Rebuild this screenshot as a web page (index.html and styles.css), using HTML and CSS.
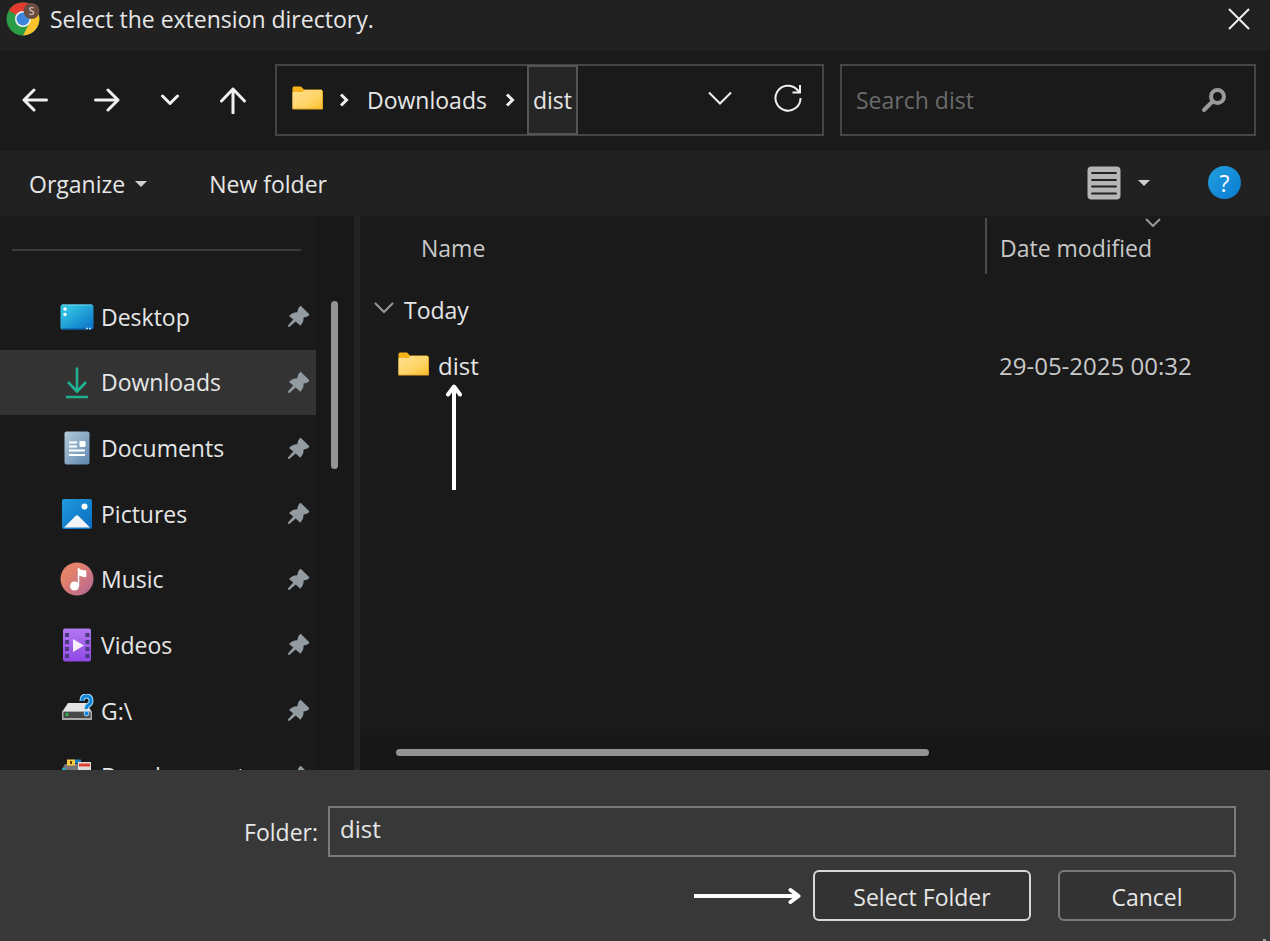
FILE: index.html
```html
<!DOCTYPE html>
<html lang="en">
<head>
    <meta charset="UTF-8">
    <meta name="viewport" content="width=device-width, initial-scale=1.0">
    <title>Select the extension directory.</title>
    <link rel="stylesheet" href="styles.css">
</head>
<body>
    <!-- Shared icons and gradients -->
    <svg class="defs" width="0" height="0" aria-hidden="true">
        <defs>
            <linearGradient id="g-folder" x1="0" y1="0" x2="1" y2="1">
                <stop offset="0" stop-color="#ffe08f"/>
                <stop offset="0.6" stop-color="#ffd466"/>
                <stop offset="1" stop-color="#fbbd2c"/>
            </linearGradient>
            <linearGradient id="g-desktop" x1="0" y1="0" x2="1" y2="1">
                <stop offset="0.2" stop-color="#2fbfe0"/>
                <stop offset="1" stop-color="#0a6fc8"/>
            </linearGradient>
            <linearGradient id="g-doc" x1="0" y1="0" x2="1" y2="1">
                <stop offset="0" stop-color="#b4cbd8"/>
                <stop offset="1" stop-color="#5f87b0"/>
            </linearGradient>
            <linearGradient id="g-pic" x1="0" y1="0" x2="1" y2="1">
                <stop offset="0" stop-color="#1f9ade"/>
                <stop offset="1" stop-color="#0a6cc0"/>
            </linearGradient>
            <linearGradient id="g-music" x1="0" y1="0" x2="1" y2="1">
                <stop offset="0.3" stop-color="#e5826a"/>
                <stop offset="1" stop-color="#b0669c"/>
            </linearGradient>
            <linearGradient id="g-video" x1="0" y1="0" x2="0" y2="1">
                <stop offset="0" stop-color="#b377f0"/>
                <stop offset="1" stop-color="#9048e6"/>
            </linearGradient>
        </defs>
        <symbol id="folder" viewBox="0 0 31 24">
            <path d="M0.500 2a1.500 1.500 0 0 1 1.500-1.500h7l3 3H29a1.500 1.500 0 0 1 1.500 1.500V22H0.500z" fill="#f6b21b"/>
            <path d="M0.500 6h10l2-2H30v19H0.500z" fill="url(#g-folder)"/>
            <path d="M0.500 23h30V5" fill="none" stroke="#e9a520"/>
        </symbol>
        <symbol id="pin" viewBox="0 0 23 23">
            <path d="M13.700.7L22.300 9.300Q22.300 11.500 16.500 12.500Q17 17 13.300 20.700L8.700 16.500L2 22.300L.7 20.800L6.300 14.500L2 11Q5 7.500 10.300 7.300Q10.800 2.500 13.700.7z" fill="#929b9f"/>
        </symbol>
    </svg>

    <header class="titlebar">
        <svg class="app-icon" width="34" height="34" viewBox="0 0 34 34" aria-hidden="true">
            <circle cx="17" cy="17" r="16.500" fill="#2a9d46"/>
            <path d="M17 17L2.700 8.800A16.500 16.500 0 0 1 31.300 8.800z" fill="#e33b2e"/>
            <path d="M17 9.500H31.600A16.500 16.500 0 0 1 17 33.500L24 20z" fill="#fcc42c"/>
            <path d="M2.700 8.800L10 21l7-4z" fill="#2a9d46"/>
            <circle cx="17" cy="17" r="8" fill="#f4f4f4"/>
            <circle cx="17" cy="17" r="6.500" fill="#3d86dc"/>
            <circle cx="25.500" cy="9" r="8" fill="#6b4c41"/>
            <text x="25.500" y="13" text-anchor="middle" class="badge-text">S</text>
        </svg>
        <h1>Select the extension directory.</h1>
        <button class="close-btn" aria-label="Close">
            <svg width="22" height="22" viewBox="0 0 22 22" class="line"><path d="M1 1l20 20M21 1L1 21"/></svg>
        </button>
    </header>

    <nav class="navbar">
        <div class="history">
            <button class="arrow-btn" aria-label="Back">
                <svg width="26" height="24" viewBox="0 0 26 24" class="line bold"><path d="M24.500 12H2M12 2L2 12L12 22"/></svg>
            </button>
            <button class="arrow-btn" aria-label="Forward">
                <svg width="26" height="24" viewBox="0 0 26 24" class="line bold"><path d="M1.500 12h22.500M14 2L24 12L14 22"/></svg>
            </button>
            <button class="recent-btn" aria-label="Recent locations">
                <svg width="18" height="12" viewBox="0 0 18 12" class="line bold"><path d="M1.500 2L9 9.500L16.500 2"/></svg>
            </button>
            <button class="arrow-btn" aria-label="Up">
                <svg width="28" height="28" viewBox="0 0 28 28" class="line bold"><path d="M14 27V3M2.500 15L14 3L25.500 15"/></svg>
            </button>
        </div>

        <div class="address">
            <svg class="address-folder" width="31" height="24"><use href="#folder"/></svg>
            <svg class="crumb-sep" width="10" height="14" viewBox="0 0 10 14"><path d="M2 1.500L7.500 7L2 12.500"/></svg>
            <button class="crumb">Downloads</button>
            <svg class="crumb-sep" width="10" height="14" viewBox="0 0 10 14"><path d="M2 1.500L7.500 7L2 12.500"/></svg>
            <button class="crumb current">dist</button>
            <button class="address-btn" aria-label="Previous locations">
                <svg width="24" height="14" viewBox="0 0 24 14" class="line"><path d="M1 1.500L12 12.500L23 1.500"/></svg>
            </button>
            <button class="address-btn" aria-label="Refresh">
                <svg width="28" height="28" viewBox="0 0 28 28" class="line"><path d="M26.500 14A12.500 12.500 0 1 1 23 5.500L25.500 8M26 1v7.500h-7.500"/></svg>
            </button>
        </div>

        <div class="search">
            <input type="text" placeholder="Search dist" aria-label="Search dist">
            <svg width="24" height="24" viewBox="0 0 24 24" aria-hidden="true"><circle cx="15.500" cy="8.500" r="6.500"/><path d="M10.500 13.500L2 22"/></svg>
        </div>
    </nav>

    <div class="toolbar">
        <button class="tool-btn">Organize <span class="caret"></span></button>
        <button class="tool-btn">New folder</button>
        <button class="view-btn" aria-label="Change your view">
            <svg width="34" height="34" viewBox="0 0 34 34">
                <rect x="0.500" y="0.500" width="33" height="33" rx="4" fill="#b5b5b5"/>
                <path d="M5 7h24M5 14h24M5 20.500h24M5 27.500h24" stroke="#222" stroke-width="1.800" stroke-linecap="round"/>
            </svg>
            <span class="caret"></span>
        </button>
        <button class="help-btn" aria-label="Help">?</button>
    </div>

    <main class="content">
        <aside class="sidebar">
            <div class="tree">
                <hr>
                <ul class="places">
                    <li>
                        <a href="#">
                            <svg class="place-icon" width="34" height="34" viewBox="0 0 34 34">
                                <rect x="0.500" y="4.500" width="33" height="25" rx="2" fill="url(#g-desktop)"/>
                                <path d="M2 5h30" stroke="#6fd3ee"/>
                                <path d="M2 29h30" stroke="#0b4f96"/>
                                <circle cx="5" cy="9" r="1.700" fill="#fff"/><circle cx="5" cy="14.500" r="1.700" fill="#fff"/>
                                <path d="M26 28.500h2M29 28.500h2" stroke="#b8e2fa" stroke-width="1.500"/>
                            </svg>
                            Desktop
                        </a>
                        <svg class="pin" width="23" height="23"><use href="#pin"/></svg>
                    </li>
                    <li class="selected">
                        <a href="#">
                            <svg class="place-icon" width="34" height="34" viewBox="0 0 34 34">
                                <path d="M17 2.500V26M8 17l9 9.500L26 17M6 32h22" fill="none" stroke="#20b191" stroke-width="2.600"/>
                            </svg>
                            Downloads
                        </a>
                        <svg class="pin" width="23" height="23"><use href="#pin"/></svg>
                    </li>
                    <li>
                        <a href="#">
                            <svg class="place-icon" width="34" height="34" viewBox="0 0 34 34">
                                <rect x="4.500" y="0.500" width="25" height="33" rx="2" fill="url(#g-doc)"/>
                                <path d="M9 11.500h8M9 15.500h8M9 19.500h16M9 24h16" stroke="#fff" stroke-width="1.800"/>
                                <rect x="19.500" y="10" width="6" height="6" rx="1" fill="#fff"/>
                            </svg>
                            Documents
                        </a>
                        <svg class="pin" width="23" height="23"><use href="#pin"/></svg>
                    </li>
                    <li>
                        <a href="#">
                            <svg class="place-icon" width="34" height="34" viewBox="0 0 34 34">
                                <rect x="2" y="2" width="30" height="30" rx="2" fill="url(#g-pic)"/>
                                <circle cx="24.500" cy="9.500" r="3" fill="#fff"/>
                                <path d="M4 30.500L15.500 19q1.500-1.500 3 0L30 30.500z" fill="#f1f5fa"/>
                            </svg>
                            Pictures
                        </a>
                        <svg class="pin" width="23" height="23"><use href="#pin"/></svg>
                    </li>
                    <li>
                        <a href="#">
                            <svg class="place-icon" width="34" height="34" viewBox="0 0 34 34">
                                <circle cx="17" cy="17" r="16.500" fill="url(#g-music)"/>
                                <path d="M18.500 24V6.500q1 2.500 7 2.500v5.500q-4 0-7-2" fill="#fff" stroke="#fff" stroke-width="1.500" stroke-linejoin="round"/>
                                <circle cx="14.500" cy="24" r="4.500" fill="#fff"/>
                            </svg>
                            Music
                        </a>
                        <svg class="pin" width="23" height="23"><use href="#pin"/></svg>
                    </li>
                    <li>
                        <a href="#">
                            <svg class="place-icon" width="34" height="34" viewBox="0 0 34 34">
                                <rect x="3" y="0.500" width="28" height="33" rx="2" fill="url(#g-video)"/>
                                <path d="M7 5v26M27.500 5v26" stroke="#4a3a80" stroke-width="4" stroke-dasharray="4 3"/>
                                <path d="M13 11v13l11-6.500z" fill="#f4edfd"/>
                            </svg>
                            Videos
                        </a>
                        <svg class="pin" width="23" height="23"><use href="#pin"/></svg>
                    </li>
                    <li>
                        <a href="#">
                            <svg class="place-icon" width="34" height="34" viewBox="0 0 34 34">
                                <path d="M8 9h18l6 9H2z" fill="#e4e4e4"/>
                                <rect x="2" y="17" width="30" height="9" fill="#a9a9a9"/>
                                <rect x="3.500" y="18" width="27" height="6" fill="#484848"/>
                                <rect x="5.500" y="19" width="3" height="3" fill="#27b24a"/>
                                <path d="M22 7q0-5 4.500-5T31 7q0 2.500-2.500 4T26.500 15" fill="none" stroke="#a8d8f5" stroke-width="5"/>
                                <path d="M22 7q0-5 4.500-5T31 7q0 2.500-2.500 4T26.500 15" fill="none" stroke="#0f86d8" stroke-width="3"/>
                                <circle cx="26.500" cy="19.500" r="2.500" fill="#0f86d8" stroke="#a8d8f5"/>
                            </svg>
                            G:\
                        </a>
                        <svg class="pin" width="23" height="23"><use href="#pin"/></svg>
                    </li>
                    <li>
                        <a href="#">
                            <svg class="place-icon" width="34" height="34" viewBox="0 0 34 34">
                                <path d="M2 10l3-5h16v26H2z" fill="#777"/>
                                <path d="M2 9h4v22H2z" fill="#27a8b8"/>
                                <path d="M14 0.500h7v4h-7z" fill="#1e7fc0"/>
                                <rect x="7" y="0.500" width="8" height="6" fill="#fccb4b"/>
                                <path d="M11 2v3" stroke="#5b430a" stroke-width="2"/>
                                <rect x="18" y="3" width="13" height="28" fill="#dcdcdc"/>
                                <path d="M19 6h11" stroke="#e2402f" stroke-width="3"/>
                            </svg>
                            Development
                        </a>
                        <svg class="pin" width="23" height="23"><use href="#pin"/></svg>
                    </li>
                </ul>
            </div>
            <div class="scroll-y"><div class="thumb"></div></div>
        </aside>

        <section class="files">
            <table>
                <thead>
                    <tr>
                        <th class="col-name">Name</th>
                        <th class="col-date">
                            Date modified
                            <svg class="sort" width="16" height="9" viewBox="0 0 16 9"><path d="M1 1l7 7l7-7"/></svg>
                        </th>
                    </tr>
                </thead>
                <tbody>
                    <tr class="group">
                        <td colspan="2">
                            <div class="cell">
                                <svg class="sort-chevron" width="20" height="12" viewBox="0 0 20 12"><path d="M1 1l9 9l9-9"/></svg>
                                Today
                            </div>
                        </td>
                    </tr>
                    <tr class="file">
                        <td>
                            <div class="cell">
                                <svg class="file-icon" width="31" height="24"><use href="#folder"/></svg>
                                <span class="file-name">dist
                                    <svg class="arrow-up" width="16" height="106" viewBox="0 0 16 106"><path d="M8 106V4"/><path class="head" d="M2 10.500L8 2.500L14 10.500"/></svg>
                                </span>
                            </div>
                        </td>
                        <td class="date">29-05-2025 00:32</td>
                    </tr>
                </tbody>
            </table>
            <div class="scroll-x"><div class="thumb"></div></div>
        </section>
    </main>

    <footer class="footer">
        <div class="folder-row">
            <label for="folder-name">Folder:</label>
            <input type="text" id="folder-name" value="dist">
        </div>
        <div class="actions">
            <svg class="arrow-right" width="107" height="18" viewBox="0 0 107 18"><path d="M0 9h103"/><path class="head" d="M96.500 3l8 6L96.500 15"/></svg>
            <button class="primary-btn">Select Folder</button>
            <button class="secondary-btn">Cancel</button>
        </div>
        <span class="grip"></span>
    </footer>
</body>
</html>
```

FILE: styles.css
```css
:root {
    --bg: #1a1a1a;
    --bar: #212121;
    --footer: #383838;
    --text: #e6e6e6;
    --border: #454545;
}

* {
    box-sizing: border-box;
}

body {
    margin: 0;
    height: 100vh;
    display: flex;
    flex-direction: column;
    overflow: hidden;
    background: var(--bg);
    color: var(--text);
    font-family: "Open Sans", "Segoe UI", sans-serif;
    font-size: 23px;
    line-height: 32px;
}

.defs {
    position: absolute;
}

svg {
    display: block;
    flex: none;
}

button,
input {
    font: inherit;
    color: inherit;
    background: none;
    border: none;
    border-radius: 0;
    padding: 0;
    margin: 0;
}

button {
    display: flex;
    align-items: center;
    justify-content: center;
    cursor: pointer;
}

.line {
    fill: none;
    stroke: #f0f0f0;
    stroke-width: 2;
}

.bold {
    stroke-width: 3;
    stroke-linecap: round;
    stroke-linejoin: round;
}

/* Title bar */
.titlebar {
    display: flex;
    align-items: center;
    height: 50px;
    padding: 0 20px 12px 6px;
    background: var(--bar);
}

.badge-text {
    font-size: 11px;
    font-weight: 600;
    fill: #c9bfb9;
}

h1 {
    flex: 1;
    margin: 0 0 0 10px;
    font-size: 23px;
    font-weight: 400;
}

/* Navigation */
.navbar {
    display: flex;
    align-items: center;
    height: 101px;
    padding: 0 14px 2px 17px;
}

.history {
    display: flex;
    align-items: center;
    gap: 36px;
    margin-right: 24px;
}

.arrow-btn {
    width: 36px;
    height: 36px;
}

.address,
.search {
    display: flex;
    align-items: center;
    height: 72px;
    border: 2px solid var(--border);
}

.address {
    flex: 1;
    padding: 0 20px 0 15px;
    margin-right: 16px;
}

.address-folder {
    margin: 0 16px 4px 0;
}

.crumb-sep {
    fill: none;
    stroke: #f0f0f0;
    stroke-width: 3;
}

.crumb {
    height: 70px;
    padding: 0 12px 0 18px;
}

.crumb + .crumb-sep {
    margin-left: 6px;
}

.crumb.current {
    margin-left: 12px;
    margin-right: auto;
    padding: 0 4px;
    border: 2px solid #555;
    background: #262626;
}

.address-btn {
    margin: 0 0 4px 42px;
}

.search {
    width: 416px;
    padding: 0 28px 0 14px;
}

.search input {
    flex: 1;
    min-width: 0;
    height: 68px;
    outline: none;
}

.search input::placeholder {
    color: #6b6b6b;
    opacity: 1;
}

.search svg {
    fill: none;
    stroke: #9a9a9a;
    stroke-width: 4;
    stroke-linecap: round;
}

/* Toolbar */
.toolbar {
    display: flex;
    align-items: center;
    height: 65px;
    padding: 0 29px 2px;
    background: var(--bar);
}

.tool-btn {
    gap: 10px;
    margin-right: 62px;
    padding-top: 2px;
}

.caret {
    border: 6px solid transparent;
    border-top-color: #d0d0d0;
    border-bottom: none;
}

.view-btn {
    gap: 17px;
    margin-left: auto;
    margin-right: 58px;
}

.help-btn {
    width: 33px;
    height: 33px;
    border-radius: 50%;
    background: linear-gradient(135deg, #22a0dd, #0a7bd3);
    color: #fff;
}

/* Sidebar */
.content {
    flex: 1;
    min-height: 0;
    display: flex;
}

.sidebar {
    display: flex;
    width: 360px;
    border-right: 6px solid #242424;
}

.tree {
    flex: 1;
    overflow: hidden;
}

hr {
    height: 2px;
    margin: 33px 15px 33px 12px;
    border: none;
    background: #3a3a3a;
}

.places {
    display: flex;
    flex-direction: column;
    height: 525px;
    margin: 0;
    padding: 0;
    list-style: none;
}

.places li {
    flex: 1;
    display: flex;
    align-items: center;
    padding: 0 6px 0 60px;
}

.places li.selected {
    background: #333;
}

.places a {
    flex: 1;
    display: flex;
    align-items: center;
    gap: 7px;
    color: inherit;
    text-decoration: none;
}

.scroll-y {
    width: 38px;
    padding: 85px 16px 0 15px;
    background: #181818;
}

.thumb {
    border-radius: 4px;
    background: #939393;
}

.scroll-y .thumb {
    height: 168px;
}

/* File list */
.files {
    flex: 1;
    display: flex;
    flex-direction: column;
    justify-content: space-between;
}

table {
    width: 100%;
    border-collapse: collapse;
}

th,
td {
    padding: 0;
    font-weight: 400;
    text-align: left;
}

th {
    height: 63px;
    color: #c8c8c8;
}

.col-name {
    padding-left: 61px;
}

.col-date {
    position: relative;
    width: 285px;
    padding-left: 15px;
    background: linear-gradient(#4c4c4c, #4c4c4c) 0 2px / 2px 56px no-repeat;
}

.sort {
    position: absolute;
    top: 2px;
    left: 160px;
}

.sort,
.sort-chevron {
    fill: none;
    stroke: #999;
    stroke-width: 2;
}

.cell {
    display: flex;
    align-items: center;
}

.group td {
    height: 61px;
    padding-left: 14px;
}

.group .cell {
    gap: 10px;
}

.sort-chevron,
.file-icon {
    margin-bottom: 4px;
}

.file td {
    height: 52px;
    font-size: 24px;
}

.file .cell {
    gap: 9px;
    padding-left: 38px;
}

.file-name {
    position: relative;
}

.file .date {
    padding-left: 14px;
    color: #c8c8c8;
}

.arrow-up,
.arrow-right {
    fill: none;
    stroke: #fff;
    stroke-width: 4;
}

.head {
    stroke-linecap: round;
    stroke-linejoin: round;
}

.arrow-up {
    position: absolute;
    top: 34px;
    left: 8px;
}

.scroll-x {
    height: 35px;
    padding: 14px 0 0 36px;
    background: #171717;
}

.scroll-x .thumb {
    width: 61%;
    height: 7px;
}

/* Footer */
.footer {
    position: relative;
    padding: 36px 34px 20px;
    background: var(--footer);
}

.folder-row {
    display: flex;
    align-items: center;
}

.folder-row label {
    width: 284px;
    text-align: right;
}

.folder-row input {
    flex: 1;
    min-width: 0;
    height: 51px;
    margin-left: 10px;
    padding: 0 10px 6px;
    border: 2px solid #7a7a7a;
    outline: none;
    font-size: 24px;
}

.actions {
    display: flex;
    align-items: center;
    justify-content: flex-end;
    margin-top: 13px;
}

.primary-btn,
.secondary-btn {
    height: 51px;
    padding-top: 2px;
    border: 2px solid #7a7a7a;
    border-radius: 6px;
    background: #333;
}

.primary-btn {
    width: 218px;
    margin: 0 27px 0 12px;
    border-color: #d8d8d8;
}

.secondary-btn {
    width: 178px;
}

.grip {
    position: absolute;
    right: 4px;
    bottom: 0;
    width: 3px;
    height: 2px;
    background: #a0a0a0;
}
```
